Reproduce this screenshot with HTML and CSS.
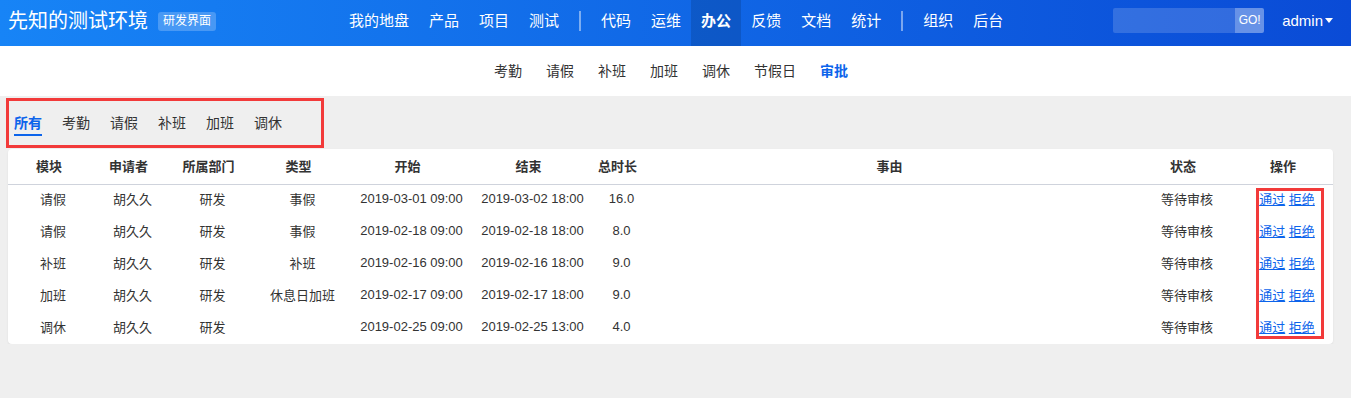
FILE: index.html
```html
<!DOCTYPE html>
<html lang="zh-CN">
<head>
    <meta charset="UTF-8">
    <title>审批 - 先知的测试环境</title>
    <link rel="stylesheet" href="styles.css">
</head>
<body>
    <header class="topbar">
        <div class="brand">
            <span class="brand-name">先知的测试环境</span>
            <span class="brand-badge">研发界面</span>
        </div>
        <nav class="main-nav">
            <a href="#">我的地盘</a>
            <a href="#">产品</a>
            <a href="#">项目</a>
            <a href="#">测试</a>
            <span class="divider"></span>
            <a href="#">代码</a>
            <a href="#">运维</a>
            <a href="#" class="active">办公</a>
            <a href="#">反馈</a>
            <a href="#">文档</a>
            <a href="#">统计</a>
            <span class="divider"></span>
            <a href="#">组织</a>
            <a href="#">后台</a>
        </nav>
        <div class="topbar-right">
            <div class="search">
                <input type="text" class="search-input">
                <button type="button" class="search-btn">GO!</button>
            </div>
            <a href="#" class="user-menu">admin<span class="caret"></span></a>
        </div>
    </header>

    <div class="sub-nav">
        <a href="#">考勤</a>
        <a href="#">请假</a>
        <a href="#">补班</a>
        <a href="#">加班</a>
        <a href="#">调休</a>
        <a href="#">节假日</a>
        <a href="#" class="active">审批</a>
    </div>

    <main class="main">
        <div class="tabs">
            <a href="#" class="active">所有</a>
            <a href="#">考勤</a>
            <a href="#">请假</a>
            <a href="#">补班</a>
            <a href="#">加班</a>
            <a href="#">调休</a>
            <div class="mark mark-tabs"></div>
        </div>

        <div class="card">
            <table class="review-table">
                <colgroup>
                    <col class="c-module">
                    <col class="c-user">
                    <col class="c-dept">
                    <col class="c-type">
                    <col class="c-begin">
                    <col class="c-end">
                    <col class="c-hours">
                    <col>
                    <col class="c-status">
                    <col class="c-actions">
                </colgroup>
                <thead>
                    <tr>
                        <th>模块</th>
                        <th>申请者</th>
                        <th>所属部门</th>
                        <th>类型</th>
                        <th>开始</th>
                        <th>结束</th>
                        <th>总时长</th>
                        <th>事由</th>
                        <th>状态</th>
                        <th>操作</th>
                    </tr>
                </thead>
                <tbody>
                    <tr>
                        <td>请假</td><td>胡久久</td><td>研发</td><td>事假</td>
                        <td>2019-03-01 09:00</td><td>2019-03-02 18:00</td><td>16.0</td><td></td>
                        <td>等待审核</td><td class="actions"><a href="#">通过</a> <a href="#">拒绝</a></td>
                    </tr>
                    <tr>
                        <td>请假</td><td>胡久久</td><td>研发</td><td>事假</td>
                        <td>2019-02-18 09:00</td><td>2019-02-18 18:00</td><td>8.0</td><td></td>
                        <td>等待审核</td><td class="actions"><a href="#">通过</a> <a href="#">拒绝</a></td>
                    </tr>
                    <tr>
                        <td>补班</td><td>胡久久</td><td>研发</td><td>补班</td>
                        <td>2019-02-16 09:00</td><td>2019-02-16 18:00</td><td>9.0</td><td></td>
                        <td>等待审核</td><td class="actions"><a href="#">通过</a> <a href="#">拒绝</a></td>
                    </tr>
                    <tr>
                        <td>加班</td><td>胡久久</td><td>研发</td><td>休息日加班</td>
                        <td>2019-02-17 09:00</td><td>2019-02-17 18:00</td><td>9.0</td><td></td>
                        <td>等待审核</td><td class="actions"><a href="#">通过</a> <a href="#">拒绝</a></td>
                    </tr>
                    <tr>
                        <td>调休</td><td>胡久久</td><td>研发</td><td></td>
                        <td>2019-02-25 09:00</td><td>2019-02-25 13:00</td><td>4.0</td><td></td>
                        <td>等待审核</td><td class="actions"><a href="#">通过</a> <a href="#">拒绝</a></td>
                    </tr>
                </tbody>
            </table>
            <div class="mark mark-actions"></div>
        </div>
    </main>
</body>
</html>
```

FILE: styles.css
```css
body {
    margin: 0;
    font-family: "Liberation Sans", "Noto Sans CJK SC", sans-serif;
    font-size: 13px;
    color: #333;
    background-color: #efefef;
}

a {
    text-decoration: none;
}

/* top bar */
.topbar {
    display: flex;
    align-items: center;
    height: 46px;
    background: linear-gradient(to right, #1784f6, #0a4bd6);
    color: white;
}

.brand {
    display: flex;
    align-items: center;
    padding-left: 8px;
    padding-bottom: 4px;
}

.brand-name {
    font-size: 20px;
    line-height: 30px;
}

.brand-badge {
    margin-left: 10px;
    padding: 0 5px;
    height: 19px;
    line-height: 19px;
    font-size: 12px;
    border-radius: 3px;
    background-color: rgba(255, 255, 255, 0.22);
}

.main-nav {
    display: flex;
    align-items: center;
    margin-left: 123px;
    height: 46px;
}

.main-nav a {
    height: 46px;
    padding: 0 10px 4px;
    box-sizing: border-box;
    line-height: 42px;
    font-size: 15px;
    color: white;
}

.main-nav a.active {
    font-weight: bold;
    background-color: rgba(0, 0, 0, 0.13);
}

.main-nav .divider {
    width: 22px;
    height: 20px;
    margin-bottom: 4px;
    background: linear-gradient(rgba(255, 255, 255, 0.45), rgba(255, 255, 255, 0.45)) center / 2px 100% no-repeat;
}

.topbar-right {
    display: flex;
    align-items: center;
    margin-left: auto;
    padding-right: 18px;
    padding-bottom: 6px;
}

.search {
    display: flex;
    height: 25px;
}

.search-input {
    width: 122px;
    height: 25px;
    border: none;
    padding: 0 6px;
    box-sizing: border-box;
    background-color: rgba(255, 255, 255, 0.16);
    border-radius: 2px 0 0 2px;
}

.search-btn {
    width: 29px;
    padding: 0;
    border: none;
    font-family: inherit;
    font-size: 12px;
    color: white;
    background-color: rgba(255, 255, 255, 0.38);
    border-radius: 0 2px 2px 0;
}

.user-menu {
    display: flex;
    align-items: center;
    margin-left: 18px;
    font-size: 15px;
    color: white;
}

.caret {
    margin-left: 2px;
    border-top: 5px solid white;
    border-left: 4px solid transparent;
    border-right: 4px solid transparent;
}

/* second nav */
.sub-nav {
    display: flex;
    justify-content: center;
    height: 50px;
    padding-right: 9px;
    background-color: white;
}

.sub-nav a {
    padding: 0 12px;
    line-height: 50px;
    font-size: 14px;
    color: #333;
}

.sub-nav a.active {
    font-weight: bold;
    color: #0c64eb;
}

/* content */
.main {
    padding: 0 18px 0 8px;
}

.tabs {
    position: relative;
    display: flex;
    height: 53px;
    padding-left: 6px;
}

.tabs a {
    position: relative;
    margin-right: 20px;
    line-height: 54px;
    font-size: 14px;
    color: #333;
}

.tabs a.active {
    font-weight: bold;
    color: #0c64eb;
}

.tabs a.active::after {
    content: "";
    position: absolute;
    left: 0;
    right: 0;
    top: 38px;
    height: 2px;
    background-color: #0c64eb;
}

.card {
    position: relative;
    background-color: white;
    border-radius: 4px;
    box-shadow: 0 1px 2px rgba(0, 0, 0, 0.08);
}

.review-table {
    width: 100%;
    border-collapse: collapse;
    table-layout: fixed;
}

.c-module { width: 90px; }
.c-user { width: 69px; }
.c-dept { width: 91px; }
.c-type { width: 89px; }
.c-begin { width: 129px; }
.c-end { width: 113px; }
.c-hours { width: 65px; }
.c-status { width: 108px; }
.c-actions { width: 92px; }

.review-table th {
    height: 35px;
    padding: 0 8px 2px 0;
    box-sizing: border-box;
    font-weight: bold;
    text-align: center;
    border-bottom: 1px solid #cfd3dc;
}

.review-table td {
    height: 32px;
    padding: 0 0 4px;
    box-sizing: border-box;
    text-align: center;
    white-space: nowrap;
}

.actions a {
    color: #0c64eb;
    text-decoration: underline;
}

/* red review marks drawn over the screenshot */
.mark {
    position: absolute;
    border: 3px solid #f23a3a;
    box-sizing: border-box;
    pointer-events: none;
}

.mark-tabs {
    left: -2px;
    top: 2px;
    width: 318px;
    height: 50px;
}

.mark-actions {
    left: 1248px;
    top: 39px;
    width: 68px;
    height: 151px;
}
```
